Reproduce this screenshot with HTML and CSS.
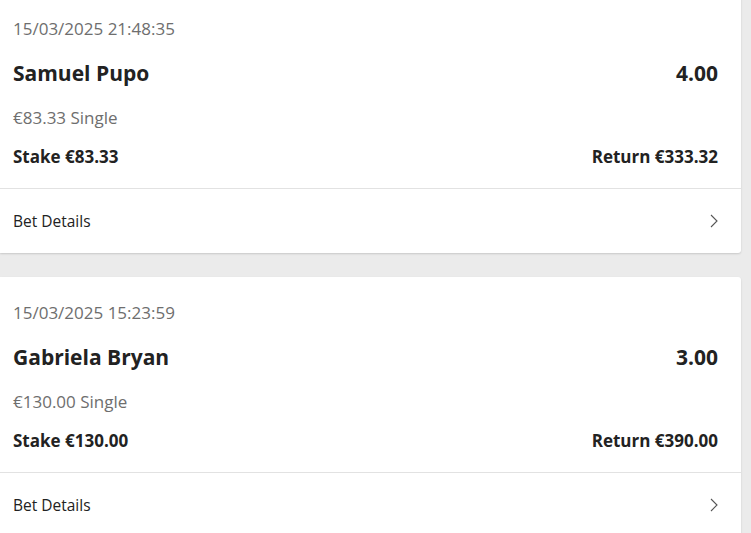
FILE: index.html
```html
<!DOCTYPE html>
<html>
<head>
<meta charset="utf-8">
<link rel="stylesheet" href="styles.css">
</head>
<body>
<div class="list">
  <div class="card">
    <div class="body">
      <div class="date">15/03/2025 21:48:35</div>
      <div class="row title">
        <span class="name">Samuel Pupo</span>
        <span class="odds">4.00</span>
      </div>
      <div class="type">€83.33 Single</div>
      <div class="row money">
        <span>Stake €83.33</span>
        <span>Return €333.32</span>
      </div>
    </div>
    <div class="details">
      <span>Bet Details</span>
      <svg class="chev" width="8" height="14" viewBox="0 0 8 14"><path d="M1 1 L7 7 L1 13" fill="none" stroke="#555" stroke-width="1.1"/></svg>
    </div>
  </div>
  <div class="card">
    <div class="body">
      <div class="date">15/03/2025 15:23:59</div>
      <div class="row title">
        <span class="name">Gabriela Bryan</span>
        <span class="odds">3.00</span>
      </div>
      <div class="type">€130.00 Single</div>
      <div class="row money">
        <span>Stake €130.00</span>
        <span>Return €390.00</span>
      </div>
    </div>
    <div class="details">
      <span>Bet Details</span>
      <svg class="chev" width="8" height="14" viewBox="0 0 8 14"><path d="M1 1 L7 7 L1 13" fill="none" stroke="#555" stroke-width="1.1"/></svg>
    </div>
  </div>
</div>
</body>
</html>
```
FILE: styles.css
```css
html, body {
  margin: 0;
  padding: 0;
  background: #ebebeb;
  height: 100%;
  overflow: hidden;
}
body {
  font-family: "Open Sans", "Noto Sans", sans-serif;
  color: #222;
}
.list {
  margin-top: -7px;
  width: 741px;
  display: flex;
  flex-direction: column;
  gap: 24px;
}
.card {
  background: #fff;
  border-radius: 0 3px 3px 0;
  box-shadow: 0 1px 2px rgba(0,0,0,0.15);
}
.body {
  padding: 24px 23px 19px 13px;
  display: flex;
  flex-direction: column;
  border-bottom: 1px solid #e2e2e2;
}
.date {
  font-size: 17px;
  color: #6e6e6e;
  line-height: 24px;
}
.row {
  display: flex;
  justify-content: space-between;
  align-items: center;
}
.title {
  margin-top: 19px;
  font-size: 21px;
  font-weight: 700;
  line-height: 26px;
}
.type {
  margin-top: 20px;
  font-size: 17px;
  color: #6e6e6e;
  line-height: 24px;
}
.money {
  margin-top: 15px;
  font-size: 17px;
  font-weight: 700;
  line-height: 24px;
}
.details {
  height: 64px;
  padding: 0 23px 0 13px;
  display: flex;
  justify-content: space-between;
  align-items: center;
  font-size: 15.5px;
}
.chev {
  display: block;
}
```
